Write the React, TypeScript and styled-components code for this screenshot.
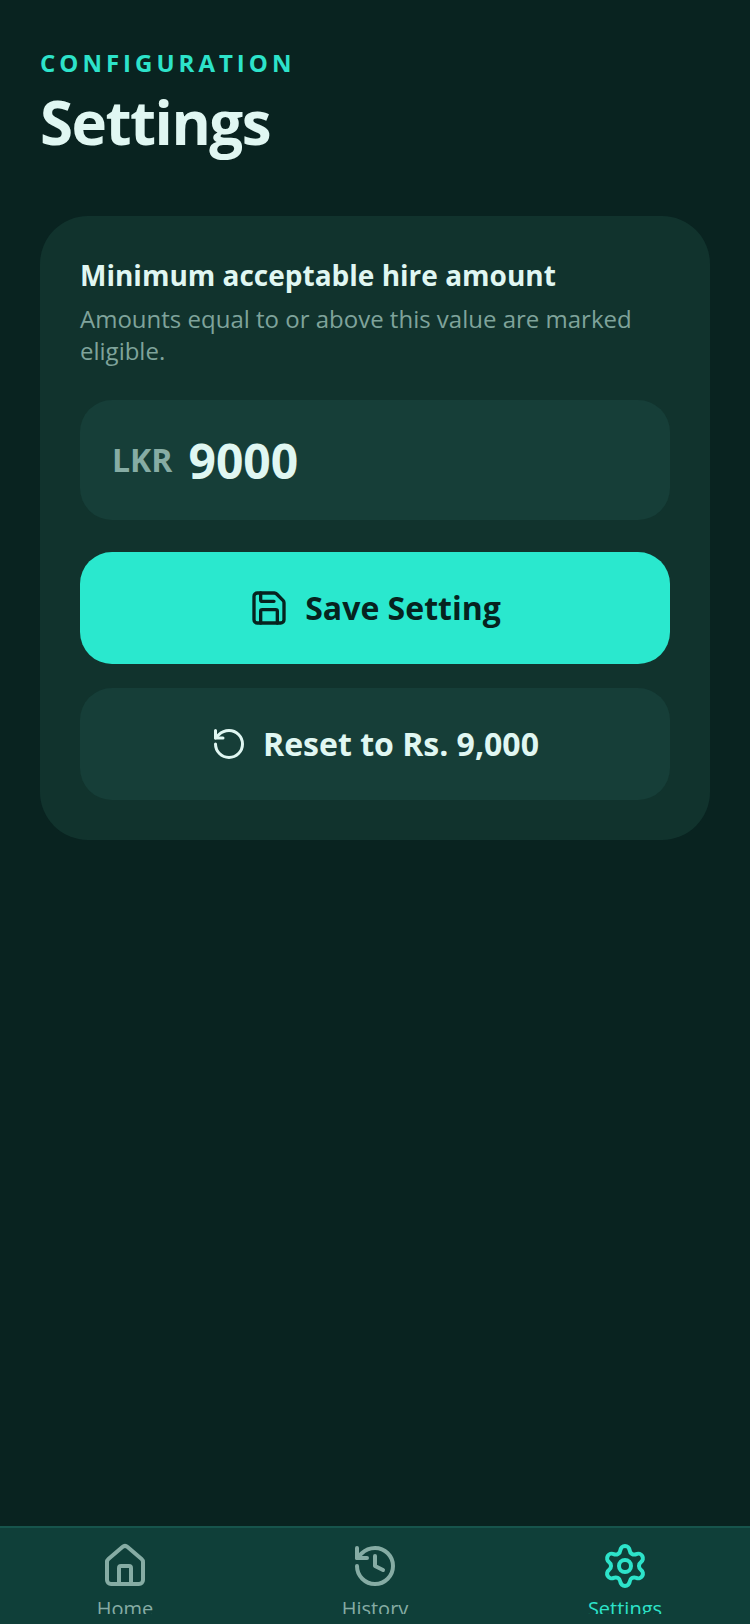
import { useState } from "react";
import styled, { createGlobalStyle } from "styled-components";
import { History, House, RotateCcw, Save, Settings } from "lucide-react";

const GlobalStyle = createGlobalStyle`
  *, *::before, *::after { box-sizing: border-box; }
  body {
    margin: 0;
    background: #092320;
    color: #e0f7f2;
    font-family: "Open Sans", "Noto Sans", sans-serif;
  }
  h1, h2, p { margin: 0; }
  button, input { font: inherit; color: inherit; border: 0; }
`;

const Screen = styled.div`
  display: flex;
  flex-direction: column;
  min-height: 100vh;
`;

const Content = styled.main`
  flex: 1;
  padding: 48px 40px;
`;

const Eyebrow = styled.p`
  color: #2de3ca;
  font-size: 24px;
  font-weight: 700;
  line-height: 30px;
  letter-spacing: 4px;
  text-transform: uppercase;
`;

const Title = styled.h1`
  margin-top: 8px;
  font-size: 60px;
  font-weight: 700;
  line-height: 72px;
  letter-spacing: -0.025em;
`;

const Card = styled.form`
  display: flex;
  flex-direction: column;
  margin-top: 58px;
  padding: 40px;
  border-radius: 48px;
  background: #11332d;
`;

const FieldLabel = styled.label`
  font-size: 28px;
  font-weight: 700;
  line-height: 38px;
`;

const Hint = styled.p`
  margin-top: 9px;
  color: #7fa39b;
  font-size: 24px;
  line-height: 32px;
`;

const AmountField = styled.div`
  display: flex;
  align-items: center;
  gap: 16px;
  height: 120px;
  margin-top: 33px;
  padding: 0 32px;
  border-radius: 32px;
  background: #163e38;
`;

const Currency = styled.span`
  color: #86aca4;
  font-size: 32px;
  font-weight: 700;
  line-height: 42px;
`;

const AmountInput = styled.input`
  flex: 1;
  min-width: 0;
  padding: 0;
  outline: none;
  background: transparent;
  font-size: 48px;
  font-weight: 700;
`;

const Actions = styled.div`
  display: flex;
  flex-direction: column;
  gap: 24px;
  margin-top: 32px;
`;

const ActionButton = styled.button<{ $primary?: boolean }>`
  display: flex;
  align-items: center;
  justify-content: center;
  gap: 16px;
  height: 112px;
  border-radius: 32px;
  background: ${(p) => (p.$primary ? "#2ae8ce" : "#163e38")};
  color: ${(p) => (p.$primary ? "#06231f" : "#e0f7f2")};
  font-size: 32px;
  font-weight: 700;
  line-height: 42px;
  cursor: pointer;
`;

const TabBar = styled.nav`
  position: sticky;
  bottom: 0;
  display: grid;
  grid-template-columns: repeat(3, 1fr);
  padding: 14px 0 10px;
  border-top: 2px solid #17544c;
  background: #0f3f39;
`;

const Tab = styled.a<{ $active?: boolean }>`
  display: flex;
  flex-direction: column;
  align-items: center;
  gap: 4px;
  height: 72px;
  overflow: hidden;
  color: ${(p) => (p.$active ? "#2de3ca" : "#86aca4")};
  font-size: 20px;
  line-height: 30px;
  text-decoration: none;

  svg { flex: none; }
`;

const DEFAULT_AMOUNT = "9000";

export default function App() {
  const [amount, setAmount] = useState(DEFAULT_AMOUNT);

  return (
    <>
      <GlobalStyle />
      <Screen>
        <Content>
          <header>
            <Eyebrow>Configuration</Eyebrow>
            <Title>Settings</Title>
          </header>
          <Card onSubmit={(e) => e.preventDefault()}>
            <FieldLabel htmlFor="amount">Minimum acceptable hire amount</FieldLabel>
            <Hint id="amount-hint">
              Amounts equal to or above this value are marked eligible.
            </Hint>
            <AmountField>
              <Currency>LKR</Currency>
              <AmountInput
                id="amount"
                inputMode="numeric"
                aria-describedby="amount-hint"
                value={amount}
                onChange={(e) => setAmount(e.target.value)}
              />
            </AmountField>
            <Actions>
              <ActionButton type="submit" $primary>
                <Save size={40} />
                Save Setting
              </ActionButton>
              <ActionButton type="button" onClick={() => setAmount(DEFAULT_AMOUNT)}>
                <RotateCcw size={36} />
                Reset to Rs. 9,000
              </ActionButton>
            </Actions>
          </Card>
        </Content>
        <TabBar>
          <Tab href="#home">
            <House size={48} />
            Home
          </Tab>
          <Tab href="#history">
            <History size={48} />
            History
          </Tab>
          <Tab href="#settings" aria-current="page" $active>
            <Settings size={48} />
            Settings
          </Tab>
        </TabBar>
      </Screen>
    </>
  );
}
